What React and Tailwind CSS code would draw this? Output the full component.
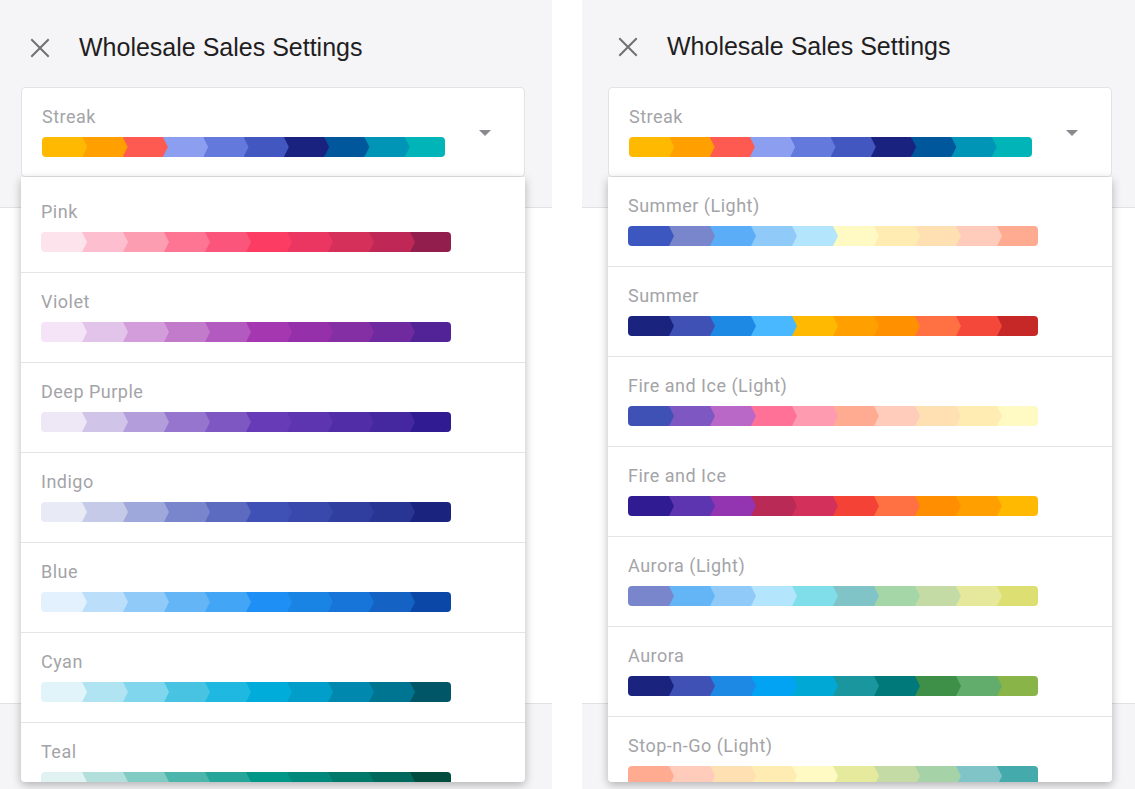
import React from 'react';

const STREAK = ['#FFB900', '#FF9F00', '#FF5A51', '#8C9EF0', '#6379DB', '#4357C0', '#1A2280', '#01579B', '#0095B6', '#00B4B8'];

const LEFT_PALETTES = [
    { name: 'Pink', colors: ['#FDE4EC', '#FDBFD0', '#FD9DB1', '#FD7592', '#FC557B', '#FC3C63', '#EA3660', '#D5305A', '#BF2856', '#921E4E'] },
    { name: 'Violet', colors: ['#F5E4F7', '#E2C4EA', '#D39DDB', '#C27ACA', '#B25AC0', '#A538B0', '#9630AA', '#852FA5', '#6F2A9F', '#522297'] },
    { name: 'Deep Purple', colors: ['#EDE7F6', '#D1C4E9', '#B39DDB', '#9575CD', '#7E57C2', '#673AB7', '#5E35B1', '#512DA8', '#4527A0', '#311B92'] },
    { name: 'Indigo', colors: ['#E8EAF6', '#C5CAE9', '#9FA8DA', '#7986CB', '#5C6BC0', '#3F51B5', '#3949AB', '#303F9F', '#283593', '#1A237E'] },
    { name: 'Blue', colors: ['#E3F1FE', '#BBDEFB', '#90CAF9', '#64B5F6', '#42A5F5', '#1E90F5', '#1A84E5', '#1774D8', '#1463C4', '#0A47A6'] },
    { name: 'Cyan', colors: ['#E0F4FA', '#B0E4F2', '#80D6EC', '#48C4E2', '#1FB8E0', '#00ACD9', '#009EC8', '#0088AE', '#007592', '#005566'] },
    { name: 'Teal', colors: ['#E0F2F1', '#B2DFDB', '#80CBC4', '#4DB6AC', '#26A69A', '#009688', '#00897B', '#00796B', '#00695C', '#004D40'] },
];

const RIGHT_PALETTES = [
    { name: 'Summer (Light)', colors: ['#3D57C0', '#7986CB', '#5CADF8', '#90CAF9', '#B3E5FC', '#FFF9C4', '#FFECB3', '#FFE0B2', '#FFCCBC', '#FFAB91'] },
    { name: 'Summer', colors: ['#1A237E', '#3F51B5', '#1E88E5', '#4AB8FF', '#FFB900', '#FFA000', '#FF9100', '#FF7043', '#F4493A', '#C62828'] },
    { name: 'Fire and Ice (Light)', colors: ['#3F51B5', '#7E57C2', '#BA68C8', '#FF7196', '#FF9BB0', '#FFAB91', '#FFCCBC', '#FFE0B2', '#FFECB3', '#FFF9C4'] },
    { name: 'Fire and Ice', colors: ['#311B92', '#5E35B1', '#9334B0', '#B92A56', '#D4305C', '#F44336', '#FF7043', '#FF8F00', '#FFA000', '#FFB900'] },
    { name: 'Aurora (Light)', colors: ['#7986CB', '#64B5F6', '#90CAF9', '#B3E5FC', '#80DEEA', '#80C4C8', '#A5D6A7', '#C5DBA5', '#E6E99C', '#DDDF72'] },
    { name: 'Aurora', colors: ['#1A237E', '#3F51B5', '#1E88E5', '#03A3F4', '#00A8D6', '#1A979E', '#00797A', '#3E8F48', '#63AD6C', '#89B548'] },
    { name: 'Stop-n-Go (Light)', colors: ['#FFAB91', '#FFCCBC', '#FFE0B2', '#FFECB3', '#FFF9C4', '#E6EA9C', '#C5DBA5', '#A5D3A7', '#80C4C8', '#45AAAC'] },
];

// chevron colour strip
const ColorBar = ({ colors, width }) => {
    const seg = width / colors.length;
    return (
        <div className="h-[20px] rounded-[4px] overflow-hidden" style={{ width }}>
            <svg width={width} height="20" className="block">
                {colors
                    .map((c, i) => {
                        const x0 = i * seg;
                        const x1 = (i + 1) * seg;
                        const last = i === colors.length - 1;
                        const pts = last
                            ? `${x0},0 ${width},0 ${width},20 ${x0},20`
                            : `${x0},0 ${x1},0 ${x1 + 5},10 ${x1},20 ${x0},20`;
                        return <polygon key={i} points={pts} fill={c} />;
                    })
                    .reverse()}
            </svg>
        </div>
    );
};

const CloseIcon = () => (
    <svg width="20" height="20" viewBox="0 0 20 20" className="block">
        <path d="M2 2 L18 18 M18 2 L2 18" stroke="#707070" strokeWidth="2" strokeLinecap="square" />
    </svg>
);

const PaletteItem = ({ palette }) => (
    <div className="pt-[19px] pb-[20px] pl-[20px] border-b border-[#e4e4e6]">
        <div className="h-[20px] leading-[20px] text-[18px] tracking-[0.5px] text-[#a4a4a8] font-['Roboto',sans-serif]">{palette.name}</div>
        <div className="mt-[10px]">
            <ColorBar colors={palette.colors} width={410} />
        </div>
    </div>
);

const Panel = ({ width, cardLeft, cardWidth, iconLeft, titleTop, palettes, listPad }) => (
    <div className="relative flex flex-col h-[789px] shrink-0" style={{ width }}>
        <div className="h-[208px] bg-[#f5f4f7] border-b border-[#e2e2e4] shrink-0">
            <div className="flex items-center h-[34px]" style={{ paddingLeft: iconLeft, marginTop: titleTop }}>
                <CloseIcon />
                <div className="ml-[29px] text-[25px] text-[#1f1f1f] font-['Liberation_Sans',Arial,sans-serif]">Wholesale Sales Settings</div>
            </div>
            <div
                className="relative h-[90px] bg-white rounded-[4px] border border-[#e3e3e6] pt-[19px] pl-[20px]"
                style={{ marginLeft: cardLeft, width: cardWidth, marginTop: 53 - titleTop }}
            >
                <div className="h-[20px] leading-[20px] text-[18px] tracking-[0.5px] text-[#a4a4a8] font-['Roboto',sans-serif]">Streak</div>
                <div className="mt-[10px]">
                    <ColorBar colors={STREAK} width={403} />
                </div>
                <div className="absolute right-[33px] top-[42px] w-0 h-0 border-l-[6px] border-r-[6px] border-t-[6px] border-l-transparent border-r-transparent border-t-[#8a8a8e]" />
            </div>
        </div>
        <div className="h-[496px] bg-white border-b border-[#e2e2e4] shrink-0" />
        <div className="flex-1 bg-[#f5f4f7]" />

        <div
            className="absolute top-[177px] h-[605px] bg-white rounded-b-[4px] overflow-hidden shadow-[0_3px_10px_rgba(0,0,0,0.28)]"
            style={{ left: cardLeft, width: cardWidth, paddingTop: listPad }}
        >
            {palettes.map((p) => (
                <PaletteItem key={p.name} palette={p} />
            ))}
        </div>
    </div>
);

const App = () => {
    return (
        <div className="flex w-[1135px] h-[789px] bg-white overflow-hidden">
            <Panel width={552} cardLeft={21} cardWidth={504} iconLeft={30} titleTop={31} palettes={LEFT_PALETTES} listPad={6} />
            <div className="w-[30px] shrink-0 bg-white" />
            <Panel width={553} cardLeft={26} cardWidth={504} iconLeft={36} titleTop={30} palettes={RIGHT_PALETTES} listPad={0} />
        </div>
    );
};

export default App;
